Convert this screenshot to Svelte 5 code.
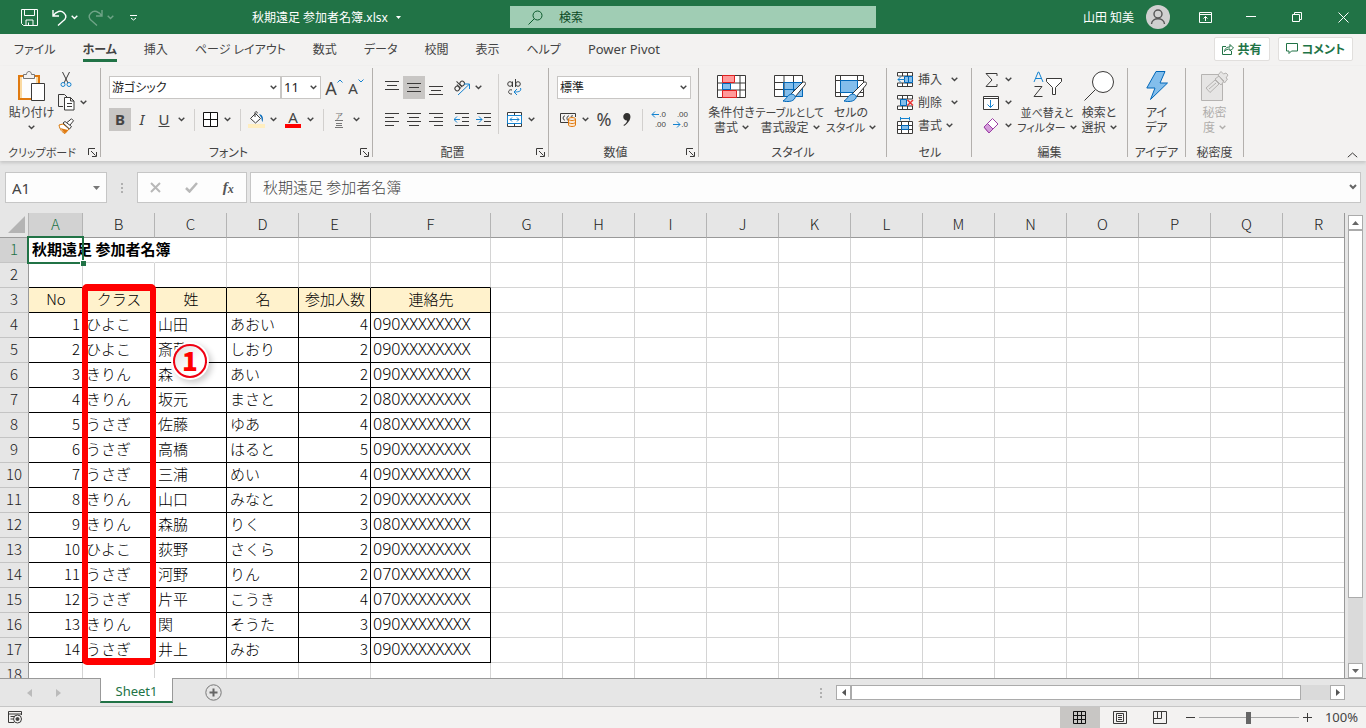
<script>
	const tabs = [
		'ファイル',
		'ホーム',
		'挿入',
		'ページ レイアウト',
		'数式',
		'データ',
		'校閲',
		'表示',
		'ヘルプ',
		'Power Pivot'
	];
	let activeTab = $state('ホーム');
	let formula = $state('秋期遠足 参加者名簿');
	let zoom = $state(100);

	const columns = 'ABCDEFGHIJKLMNOPQR'.split('');
	const widths = { A: 54, F: 120 };
	const headings = ['No', 'クラス', '姓', '名', '参加人数', '連絡先'];
	const people = [
		['ひよこ', '山田', 'あおい', 4, '090XXXXXXXX'],
		['ひよこ', '斎藤', 'しおり', 2, '090XXXXXXXX'],
		['きりん', '森', 'あい', 2, '090XXXXXXXX'],
		['きりん', '坂元', 'まさと', 2, '080XXXXXXXX'],
		['うさぎ', '佐藤', 'ゆあ', 4, '080XXXXXXXX'],
		['うさぎ', '高橋', 'はると', 5, '090XXXXXXXX'],
		['うさぎ', '三浦', 'めい', 4, '090XXXXXXXX'],
		['きりん', '山口', 'みなと', 2, '090XXXXXXXX'],
		['きりん', '森脇', 'りく', 3, '080XXXXXXXX'],
		['ひよこ', '荻野', 'さくら', 2, '090XXXXXXXX'],
		['うさぎ', '河野', 'りん', 2, '070XXXXXXXX'],
		['うさぎ', '片平', 'こうき', 4, '070XXXXXXXX'],
		['きりん', '関', 'そうた', 3, '090XXXXXXXX'],
		['うさぎ', '井上', 'みお', 3, '090XXXXXXXX']
	];

	// sheet rows, first one is row 1
	const rows = [
		['秋期遠足 参加者名簿'],
		[],
		headings,
		...people.map((p, i) => [i + 1, ...p]),
		[]
	];
</script>

{#snippet chev()}
	<svg class="chev" width="7" height="5" viewBox="0 0 7 5"><path d="M.7.8 3.5 3.5 6.3.8" /></svg>
{/snippet}

{#snippet drop(label)}
	<button class="drop" aria-label={label}>{@render chev()}</button>
{/snippet}

{#snippet caption(text, launcher)}
	<div class="caption">
		<span>{text}</span>
		{#if launcher}
			<button class="launcher" aria-label={`${text}の設定`}>
				<svg class="line" width="9" height="9" viewBox="0 0 9 9"><path d="M.5 7V.5H7M3 3l4.5 4.5M8.5 4v4.5H4" /></svg>
			</button>
		{/if}
	</div>
{/snippet}

{#snippet lines(kind)}
	<svg class="line" width="15" height="15" viewBox="0 0 15 15">
		{#if kind === 'top'}<path d="M0 1.5h14M2 5.5h10M0 9.5h14" />
		{:else if kind === 'middle'}<path d="M0 3.5h14M2 7.5h10M0 11.5h14" />
		{:else if kind === 'bottom'}<path d="M0 6.5h14M2 10.5h10M0 14.5h14" />
		{:else if kind === 'left'}<path d="M0 1.5h14M0 5.5h9M0 9.5h14M0 13.5h9" />
		{:else if kind === 'center'}<path d="M0 1.5h14M2 5.5h10M0 9.5h14M2 13.5h10" />
		{:else if kind === 'right'}<path d="M0 1.5h14M5 5.5h9M0 9.5h14M5 13.5h9" />
		{:else}
			<path d="M1 1.5h14M8 5.5h7M8 9.5h7M1 13.5h14" />
			{#if kind === 'outdent'}<path class="blue" d="M6 7.5H0M3 4.5l-3 3 3 3" />
			{:else}<path class="blue" d="M0 7.5h6M3 4.5l3 3-3 3" />{/if}
		{/if}
	</svg>
{/snippet}

{#snippet brush()}
	<path fill="#fff" stroke="#333" d="M29 7c3 0 3 1 2 3L21 22l-4-3z" />
	<path fill="#83beec" stroke="#0067b8" d="M17 19c3 0 5 2 4 4-2 4-8 4-12 3 3-1 4-6 8-7z" />
{/snippet}

<div class="app">
	<header class="titlebar">
		<div class="quick">
			<button aria-label="上書き保存">
				<svg width="17" height="17" viewBox="0 0 17 17"><path d="M.5.5h16v16h-14l-2-2zM3.5.5v6h10v-6M5 16.5V11h7v5.5M7.5 16v-2.5" /></svg>
			</button>
			<button class="wide" aria-label="元に戻す">
				<svg width="15" height="17" viewBox="0 0 15 17"><path stroke-width="1.4" d="M1 1v6h6M1 7C4 2 9 1 12 4s2 6-1 8l-5 4.5" /></svg>
				{@render chev()}
			</button>
			<button class="wide faded" aria-label="やり直し">
				<svg width="15" height="17" viewBox="0 0 15 17"><path stroke-width="1.4" d="M14 1v6H8M14 7C11 2 6 1 3 4s-2 6 1 8l5 4.5" /></svg>
				{@render chev()}
			</button>
			<button class="customize" aria-label="クイック アクセスのカスタマイズ">
				<svg width="9" height="7" viewBox="0 0 9 7"><path d="M1 1.5h7M2 4l2.5 2L7 4" /></svg>
			</button>
		</div>
		<button class="docname">秋期遠足 参加者名簿.xlsx <svg width="5" height="3" viewBox="0 0 5 3"><path class="solid" d="M0 0h5L2.5 3z" /></svg></button>
		<label class="search">
			<svg width="15" height="15" viewBox="0 0 15 15"><circle cx="9.5" cy="5.5" r="4.5" /><path d="M6.3 8.7.5 14.5" /></svg>
			<input type="text" placeholder="検索" aria-label="検索" />
		</label>
		<button class="user">
			山田 知美
			<svg width="24" height="24" viewBox="0 0 24 24"><circle class="disc" cx="12" cy="12" r="12" /><circle cx="12" cy="9" r="4" /><path d="M5.5 19c.5-7 12.500-7 13 0" /></svg>
		</button>
		<div class="window">
			<button aria-label="リボンの表示オプション"><svg width="13" height="11" viewBox="0 0 13 11"><path d="M.5.5h12v10H.5zM.5 2.5h12M6.5 9V4.5M4.5 6.5l2-2 2 2" /></svg></button>
			<button aria-label="最小化"><svg width="10" height="2" viewBox="0 0 10 2"><path d="M0 .5h10" /></svg></button>
			<button aria-label="元に戻す (縮小)"><svg width="10" height="10" viewBox="0 0 10 10"><path d="M.5 2.5h7v7h-7zM2.5 2V.5h7v7H8" /></svg></button>
			<button aria-label="閉じる"><svg width="11" height="11" viewBox="0 0 11 11"><path d="m.5.5 10 10m0-10-10 10" /></svg></button>
		</div>
	</header>

	<nav class="tabs">
		{#each tabs as tab}
			<button class="tab" class:active={activeTab === tab} onclick={() => (activeTab = tab)}>{tab}</button>
		{/each}
		<div class="actions">
			<button><svg width="12" height="12" viewBox="0 0 12 12"><path d="M4 3.5H.5v8h9V8M2.5 8.5C3 5 5 4 8 4V1.5L11.5 5 8 8V6C5.5 6 4 6.5 2.5 8.5z" /></svg>共有</button>
			<button><svg width="12" height="12" viewBox="0 0 12 12"><path d="M.5.5h11V8h-6L3 10.5V8H.5z" /></svg>コメント</button>
		</div>
	</nav>

	<section class="ribbon">
		<div class="group clip">
			<div class="tools">
				<button class="big paste">
					<svg width="28" height="31" viewBox="0 0 28 31">
						<path d="M1 5h20v23H1z" fill="#fdfdfd" stroke="#e07a10" stroke-width="2" />
						<path d="M3 6v21M19 6v7" stroke="#fad9a0" stroke-width="2" />
						<path d="M5.5 7.5v-4h3c0-4 5-4 5 0h3v4z" fill="#f3f2f1" stroke="#777" />
						<path d="M13.5 12.5h13v17h-13z" fill="#fff" stroke="#3b3a39" />
					</svg>
					<span>貼り付け</span>
					{@render chev()}
				</button>
				<div class="stack">
					<button class="tool" aria-label="切り取り">
						<svg class="line" width="12" height="17" viewBox="0 0 12 17"><path d="m2.500 1 5.500 11M9.500 1 4 12" /><circle class="blue" cx="3" cy="13.5" r="2" /><circle class="blue" cx="9" cy="13.5" r="2" /></svg>
					</button>
					<div class="row">
						<button class="tool" aria-label="コピー">
							<svg class="line" width="17" height="17" viewBox="0 0 17 17"><path d="M5 12.5H.5V.5h6L9 3" /><path fill="#fff" d="M6.5 3.5h6L16 7v9H6.5zM12.5 3.5V7H16M9 9.5h5M9 12.5h5" /></svg>
						</button>
						{@render drop('コピーのオプション')}
					</div>
					<button class="tool" aria-label="書式のコピー">
						<svg class="line" width="17" height="16" viewBox="0 0 17 16"><path stroke="#d97706" fill="#fff" d="m1 7 4-1 6 5-4 4.5C4 14 2 12 1 7z" /><path fill="#e07a10" stroke="none" d="m2 10 8 2-3 3.5z" /><path fill="#fff" d="m5 5 2-1.5 6.500 5L11.500 11zM9 4.500 13.500.8l2 2L12 7" /></svg>
					</button>
				</div>
			</div>
			{@render caption('クリップボード', true)}
		</div>

		<div class="group font">
			<div class="tools rows">
				<div class="row">
					<select class="font-name" aria-label="フォント"><option>游ゴシック</option></select>
					<select class="font-size" aria-label="フォント サイズ"><option>11</option></select>
					<button class="tool" aria-label="フォント サイズの拡大"><span class="glyph">A</span><svg class="sup" width="6" height="4" viewBox="0 0 6 4"><path class="blue" d="m.5 3.500 2.500-2.500 2.500 2.500" /></svg></button>
					<button class="tool" aria-label="フォント サイズの縮小"><span class="glyph small">A</span><svg class="sup" width="6" height="4" viewBox="0 0 6 4"><path class="blue" d="m.5.5 2.500 2.500L5.500.5" /></svg></button>
				</div>
				<div class="row">
					<button class="tool on"><b>B</b></button>
					<button class="tool"><i>I</i></button>
					<button class="tool"><u>U</u></button>
					{@render drop('下線')}
					<span class="sep"></span>
					<button class="tool" aria-label="罫線"><svg width="15" height="15" viewBox="0 0 15 15"><path fill="#fff" stroke="#111" d="M.5.5h14v14H.5zM7.5 0v15M0 7.5h15" /></svg></button>
					{@render drop('罫線の種類')}
					<span class="sep"></span>
					<button class="tool" aria-label="塗りつぶしの色">
						<svg class="line" width="17" height="17" viewBox="0 0 17 17"><path fill="#fff" d="m2.500 7.500 5-5 5 5-5 4.500zM7 6V1.500c1-2 3 0 2 1" /><path fill="#0067b8" stroke="none" d="M11 3c4 1 4.500 4 3.500 8-1-1.500-1-3-1-4z" /><path fill="#ffeec0" stroke="none" d="M0 13h17v4H0z" /></svg>
					</button>
					{@render drop('塗りつぶしの色の選択')}
					<button class="tool color" aria-label="フォントの色"><span class="glyph small">A</span><span class="bar"></span></button>
					{@render drop('フォントの色の選択')}
					<span class="sep"></span>
					<button class="tool ruby" aria-label="ふりがなの表示">
						<span>ア</span>
						<svg class="line" width="8" height="8" viewBox="0 0 8 8"><path stroke="#777" d="M0 .5h8M1 3.5h6M1 5.5h6M0 7.5h8" /></svg>
					</button>
					{@render drop('ふりがな')}
				</div>
			</div>
			{@render caption('フォント', true)}
		</div>

		<div class="group align">
			<div class="tools">
				<div class="rows">
					<div class="row">
						<button class="tool" aria-label="上揃え">{@render lines('top')}</button>
						<button class="tool on" aria-label="上下中央揃え">{@render lines('middle')}</button>
						<button class="tool" aria-label="下揃え">{@render lines('bottom')}</button>
						<button class="tool apart" aria-label="方向">
							<svg class="line" width="17" height="17" viewBox="0 0 17 17"><g transform="rotate(-45 6 7)"><circle cx="3" cy="7.5" r="2.3" /><path d="M5.5 4.5V10M7.5 2v8" /><circle cx="10" cy="7.5" r="2.3" /></g><path class="blue" d="m5 16 11-10.500M11 5h5.500v5" /></svg>
						</button>
						{@render drop('方向')}
					</div>
					<div class="row">
						<button class="tool" aria-label="左揃え">{@render lines('left')}</button>
						<button class="tool" aria-label="中央揃え">{@render lines('center')}</button>
						<button class="tool" aria-label="右揃え">{@render lines('right')}</button>
						<button class="tool apart" aria-label="インデントを減らす">{@render lines('outdent')}</button>
						<button class="tool" aria-label="インデントを増やす">{@render lines('indent')}</button>
					</div>
				</div>
				<span class="sep tall"></span>
				<div class="rows">
					<div class="row">
						<button class="tool" aria-label="折り返して全体を表示する">
							<svg class="line" width="15" height="17" viewBox="0 0 15 17"><circle cx="3" cy="5" r="2.3" /><path d="M5.5 2.5V8M8.5 0v8" /><circle cx="11" cy="5" r="2.3" /><path d="M5 11c-4-1.500-5 4.500 0 4" /><path class="blue" d="M13.500 9c1 3-1 4-6 4M10 10l-3 3 3 3" /></svg>
						</button>
					</div>
					<div class="row">
						<button class="tool" aria-label="セルを結合して中央揃え">
							<svg class="line" width="15" height="15" viewBox="0 0 15 15"><path fill="#fff" d="M.5.5h14v14H.5zM7.5.5V3M7.5 12v2.500" /><path class="blue" d="M.5 3.5h14v8H.5zM3 7.5h9M5 5.500l-2 2 2 2M10 5.500l2 2-2 2" /></svg>
						</button>
						{@render drop('セルの結合')}
					</div>
				</div>
			</div>
			{@render caption('配置', true)}
		</div>

		<div class="group number">
			<div class="tools rows">
				<div class="row">
					<select class="format" aria-label="数値の書式"><option>標準</option></select>
				</div>
				<div class="row">
					<button class="tool" aria-label="通貨表示形式">
						<svg class="line" width="17" height="15" viewBox="0 0 17 15"><path d="M9 10.5H.5v-9h15V5M5 4C2.500 3.500 2.500 8.500 5 8M9 4C6.500 3.500 6.500 8.500 8 8M13 4c-1-.5-2 0-2 1" /><path fill="#fde7cf" stroke="#e07a10" d="M8.5 7c0-2 7-2 7 0v6c0 2-7 2-7 0zM8.500 7c0 2 7 2 7 0M8.500 10c0 2 7 2 7 0" /></svg>
					</button>
					{@render drop('通貨')}
					<button class="tool percent">%</button>
					<button class="tool" aria-label="桁区切りスタイル">
						<svg width="8" height="13" viewBox="0 0 8 13"><path fill="#323130" d="M4 0c5 0 5 8-3 13L.5 12C3 10.500 4 9 4 7.500-1 7.500-1 0 4 0z" /></svg>
					</button>
					<span class="sep"></span>
					<button class="tool dec" aria-label="小数点以下の表示桁数を増やす"><span><svg width="8" height="7" viewBox="0 0 8 7"><path class="blue" d="M8 3.5H1M4 .5l-3 3 3 3" /></svg>.0</span><span>.00</span></button>
					<button class="tool dec" aria-label="小数点以下の表示桁数を減らす"><span>.00</span><span><svg width="8" height="7" viewBox="0 0 8 7"><path class="blue" d="M0 3.5h7M4 .5l3 3-3 3" /></svg>.0</span></button>
				</div>
			</div>
			{@render caption('数値', true)}
		</div>

		<div class="group styles">
			<div class="tools">
				<button class="big">
					<svg class="line" width="29" height="23" viewBox="0 0 29 23"><path fill="#fff" d="M.5.5h28v22H.5zM.5 8h28M.5 15h28M23 .5v22M6 .5v22" /><path fill="#ff9a9a" stroke="#e02020" d="M5.500 .5h12v7h-12zM5.500 15.500h14v7h-14z" /><path fill="#83beec" stroke="#0067b8" d="M5.500 8.500h8v6h-8z" /></svg>
					<span>条件付き</span>
					<span>書式 {@render chev()}</span>
				</button>
				<button class="big table">
					<svg class="line" width="32" height="27" viewBox="0 0 32 27"><path fill="#fff" d="M.5.5h28v21H.5zM.5 7.500h28" /><path fill="#83beec" stroke="none" d="M10 8h18v14H10z" /><path d="M.5 14.500h28M10 .5v21M19.500 .5v21" /><path d="M9.500 7.500h19v14h-19zM19.500 8v13.500M10 14.500h18" stroke="#0067b8" />{@render brush()}</svg>
					<span class="tight">テーブルとして</span>
					<span>書式設定 {@render chev()}</span>
				</button>
				<button class="big cell">
					<svg class="line" width="32" height="27" viewBox="0 0 32 27"><path fill="#fff" d="M.5.5h28v21H.5zM.5 5.500h28M5.500 .5v21M22.500 .5v21M.5 17.500h28" /><path fill="#83beec" stroke="#0067b8" d="M5.500 5.500h17v12h-17z" />{@render brush()}</svg>
					<span>セルの</span>
					<span class="tight">スタイル {@render chev()}</span>
				</button>
			</div>
			{@render caption('スタイル', false)}
		</div>

		<div class="group cells">
			<div class="tools stack">
				<button class="wide-tool">
					<svg class="line" width="17" height="15" viewBox="0 0 17 15"><path fill="#fff" d="M.5.5h15V4H.5zM.5 11h15v3.500H.5zM5.500.5V4M10.500.5V4M5.500 11v3.500M10.500 11v3.500" /><path fill="#83beec" stroke="#0067b8" d="M7.500 4.500h8v6h-8zM11.500 4.500v6" /><path class="blue" d="M8 7.500H1M4 4.500l-3 3 3 3" /></svg>
					<span>挿入</span>{@render chev()}
				</button>
				<button class="wide-tool">
					<svg class="line" width="17" height="15" viewBox="0 0 17 15"><path fill="#fff" d="M.5.5h15V4H.5zM.5 11h15v3.500H.5zM5.500.5V4M10.500.5V4M5.500 11v3.500M10.500 11v3.500" /><path fill="#83beec" stroke="#0067b8" d="M3.500 4.500h6v6h-6z" /><path stroke="#e83030" stroke-width="1.5" d="m10.500 5 5.500 5.500M16 5l-5.500 5.500" /></svg>
					<span>削除</span>{@render chev()}
				</button>
				<button class="wide-tool near">
					<svg class="line" width="17" height="17" viewBox="0 0 17 17"><path fill="#fff" d="M.5 4.500h15v12H.5zM.5 8.500h15M.5 12.500h15M4.500 4.500v12M11.500 4.500v12" /><path fill="#83beec" stroke="#0067b8" d="M4.500 8.500h7v4h-7z" /><path class="blue" d="M3.500 0v3.500M12.500 0v3.500M3.500 1.500h9" /></svg>
					<span>書式</span>{@render chev()}
				</button>
			</div>
			{@render caption('セル', false)}
		</div>

		<div class="group edit">
			<div class="tools">
				<div class="stack">
					<div class="row">
						<button class="tool" aria-label="合計"><svg class="line" width="13" height="14" viewBox="0 0 13 14"><path d="M12 3V.5H1L7 7l-6 6.500h11V11" /></svg></button>
						{@render drop('合計の種類')}
					</div>
					<div class="row">
						<button class="tool" aria-label="フィル"><svg class="line" width="16" height="14" viewBox="0 0 16 14"><path fill="#fff" d="M.5.5h15v13H.5zM.5 2.500h15" /><path class="blue" d="M7.500 4v7.500M4.500 8.500l3 3 3-3" /></svg></button>
						{@render drop('フィルの種類')}
					</div>
					<div class="row">
						<button class="tool" aria-label="クリア"><svg width="16" height="16" viewBox="0 0 16 16"><path fill="#fff" stroke="#9b3fa5" d="m1 9 8.500-8.500L15 6l-9 9z" /><path fill="#d59ddb" stroke="#9b3fa5" d="m1 9 3.500-3.500 5.500 5.500-4 4z" /></svg></button>
						{@render drop('クリアの種類')}
					</div>
				</div>
				<button class="big sort">
					<svg class="line" width="29" height="27" viewBox="0 0 29 27"><path class="blue" d="M1 11 5.200 1h.6L10 11M2.500 7.500h6.500" /><path d="M1.500 15.500h7.500l-8 10h8.500" /><path fill="#fff" d="M13.500 7.500h15v3l-6 6v7h-3v-7l-6-6z" /></svg>
					<span class="tight">並べ替えと</span>
					<span class="tight">フィルター {@render chev()}</span>
				</button>
				<button class="big find">
					<svg class="line" width="30" height="30" viewBox="0 0 30 30"><circle fill="#fff" cx="19" cy="11" r="10.5" /><path d="M11.500 18.500.5 29.500" /></svg>
					<span>検索と</span>
					<span>選択 {@render chev()}</span>
				</button>
			</div>
			{@render caption('編集', false)}
		</div>

		<div class="group narrow">
			<div class="tools">
				<button class="big">
					<svg width="22" height="29" viewBox="0 0 22 29"><path fill="#83beec" stroke="#0067b8" d="M10 .5h9L14 12h7.500L4.500 28.500 9 17H.8z" /></svg>
					<span>アイ</span>
					<span>デア</span>
				</button>
			</div>
			{@render caption('アイデア', false)}
		</div>

		<div class="group narrow">
			<div class="tools">
				<button class="big" disabled>
					<svg width="28" height="30" viewBox="0 0 28 30"><g fill="#e6e5e4" stroke="#b5b3b1"><path d="M.5 3.500h21v26H.5z" /><path d="m5 17 9-8 4 4-9 8.500zM14 8l4-3 5 5-3 4zM17 4l3-3.500 2.500 2.500 2.500-1 2 2-2 3 1.500 1-3 4z" /><path d="m8 18 7-6" /></g></svg>
					<span>秘密</span>
					<span>度 {@render chev()}</span>
				</button>
			</div>
			{@render caption('秘密度', false)}
		</div>
		<button class="collapse" aria-label="リボンを折りたたむ"><svg class="line" width="11" height="6" viewBox="0 0 11 6"><path d="M.8 5.200 5.500 1l4.700 4.200" /></svg></button>
	</section>

	<div class="formula-bar">
		<div class="name-box">
			<input type="text" value="A1" aria-label="名前ボックス" />
			<button aria-label="名前の一覧"><svg width="7" height="4" viewBox="0 0 7 4"><path fill="#777" d="M0 0h7L3.500 4z" /></svg></button>
		</div>
		<span class="dots"></span>
		<div class="fx">
			<button aria-label="キャンセル"><svg width="11" height="11" viewBox="0 0 11 11"><path stroke="#b8b8b8" stroke-width="2" d="m1 1 9 9m0-9-9 9" /></svg></button>
			<button aria-label="入力"><svg width="13" height="11" viewBox="0 0 13 11"><path fill="none" stroke="#b8b8b8" stroke-width="2.5" d="m1 6 3.500 3.500L12 1" /></svg></button>
			<button class="fn"><em>f</em><em class="x">x</em></button>
		</div>
		<div class="formula">
			<input type="text" bind:value={formula} aria-label="数式バー" />
			<button aria-label="数式バーの展開"><svg width="8" height="6" viewBox="0 0 8 6"><path fill="none" stroke="#666" stroke-width="2" d="m1 1 3 3 3-3" /></svg></button>
		</div>
	</div>

	<main class="sheet">
		<div class="grid">
			<table>
				<colgroup>
					<col style:width="29px" />
					{#each columns as c}<col style:width={`${widths[c] ?? 72}px`} />{/each}
				</colgroup>
				<thead>
					<tr>
						<th class="corner" aria-label="すべて選択"><svg width="17" height="17" viewBox="0 0 17 17"><path fill="#b4b4b4" d="M17 0v17H0z" /></svg></th>
						{#each columns as c}<th scope="col" class:selected={c === 'A'}>{c}</th>{/each}
					</tr>
				</thead>
				<tbody>
					{#each rows as row, r}
						<tr class:above={r === 1} class:heading={r === 2} class:data={r > 2 && r < 17} class:title={r === 0}>
							<th scope="row" class:selected={r === 0}>{r + 1}</th>
							{#each columns as c, i}
								<td class:listed={r > 1 && r < 17 && i < 6} class:num={i === 0 || i === 4} class:tel={i === 5}>{row[i] ?? ''}</td>
							{/each}
						</tr>
					{/each}
				</tbody>
			</table>
			<div class="selection"><span class="handle"></span></div>
			<div class="frame"></div>
			<div class="marker">1</div>
		</div>
		<div class="vscroll">
			<button aria-label="上へ"><svg width="7" height="4" viewBox="0 0 7 4"><path fill="#666" d="M0 4h7L3.500 0z" /></svg></button>
			<div class="track"><div class="thumb"></div></div>
			<button aria-label="下へ"><svg width="7" height="4" viewBox="0 0 7 4"><path fill="#666" d="M0 0h7L3.500 4z" /></svg></button>
		</div>
	</main>

	<div class="sheetbar">
		<div class="arrows">
			<button aria-label="前のシート"><svg width="5" height="8" viewBox="0 0 5 8"><path fill="#bbb" d="M5 0v8L0 4z" /></svg></button>
			<button aria-label="次のシート"><svg width="5" height="8" viewBox="0 0 5 8"><path fill="#bbb" d="M0 0v8l5-4z" /></svg></button>
		</div>
		<button class="sheet-tab">Sheet1</button>
		<button class="add" aria-label="新しいシート"><svg width="17" height="17" viewBox="0 0 17 17"><circle cx="8.5" cy="8.5" r="7.7" fill="none" stroke="#777" /><path stroke="#666" stroke-width="2" d="M8.500 4.500v8M4.500 8.500h8" /></svg></button>
		<span class="dots"></span>
		<div class="hscroll">
			<button aria-label="左へ"><svg width="4" height="7" viewBox="0 0 4 7"><path fill="#555" d="M4 0v7L0 3.500z" /></svg></button>
			<div class="track"><div class="thumb"></div></div>
			<button aria-label="右へ"><svg width="4" height="7" viewBox="0 0 4 7"><path fill="#555" d="M0 0v7l4-3.500z" /></svg></button>
		</div>
	</div>

	<footer class="status">
		<button class="macro" aria-label="マクロの記録"><svg class="line" width="15" height="13" viewBox="0 0 15 13"><path d="M6 11.500H.5V.5h13V4M.5 3h13M2.500 5.500h4M2.500 8H5" /><circle cx="9.5" cy="8" r="4" /><circle cx="9.5" cy="8" r="1.5" fill="#444" /></svg></button>
		<div class="views">
			<button class="on" aria-label="標準"><svg class="line" width="13" height="13" viewBox="0 0 13 13"><path stroke="#111" d="M.5.5h12v12H.5zM4.500.5v12M8.500.5v12M.5 4.500h12M.5 8.500h12" /></svg></button>
			<button aria-label="ページ レイアウト"><svg class="line" width="14" height="13" viewBox="0 0 14 13"><path d="M.5.5h13v12H.5zM3.500 2.500h7v8h-7zM5 4.500h4M5 6.500h4M5 8.500h4" /></svg></button>
			<button aria-label="改ページ プレビュー"><svg class="line" width="14" height="13" viewBox="0 0 14 13"><path d="M.5.5h13v12H.5zM4.500.5v7M8.500.5v7M.5 7.500h8" /></svg></button>
		</div>
		<button class="step" aria-label="縮小"><svg class="line" width="9" height="9" viewBox="0 0 9 9"><path d="M0 4.500h9" /></svg></button>
		<input type="range" min="0" max="200" bind:value={zoom} aria-label="ズーム" />
		<button class="step" aria-label="拡大"><svg class="line" width="9" height="9" viewBox="0 0 9 9"><path d="M0 4.500h9M4.500 0v9" /></svg></button>
		<button class="percentage">{zoom}%</button>
	</footer>
</div>

<style>
	:global(body) {
		margin: 0;
	}

	.app {
		display: flex;
		flex-direction: column;
		height: 100vh;
		overflow: hidden;
		background: #e6e6e6;
		color: #444;
		font-family: 'Noto Sans', 'Noto Sans CJK JP', sans-serif;
		font-size: 12px;
		line-height: 15px;
		font-feature-settings: 'palt';
	}

	button,
	input,
	select {
		font: inherit;
		font-feature-settings: inherit;
		color: inherit;
		margin: 0;
		padding: 0;
		border: 0;
		border-radius: 0;
		background: none;
	}

	input {
		min-width: 0;
		outline: none;
	}

	button {
		display: flex;
		align-items: center;
		justify-content: center;
		flex: none;
		white-space: nowrap;
	}

	svg {
		flex: none;
		display: block;
	}

	.line {
		fill: none;
		stroke: #3b3a39;
	}

	.blue {
		fill: none;
		stroke: #1583d0;
	}

	.chev {
		fill: none;
		stroke: currentColor;
		stroke-width: 1.4;
	}

	/* title bar */
	.titlebar {
		display: flex;
		align-items: center;
		flex: none;
		height: 34px;
		background: #217346;
		color: #fff;
	}

	.titlebar svg {
		fill: none;
		stroke: currentColor;
	}

	.titlebar .solid {
		fill: currentColor;
		stroke: none;
	}

	.quick {
		display: flex;
		gap: 10px;
		padding-left: 16px;
		width: 234px;
		box-sizing: border-box;
	}

	.quick button {
		min-width: 26px;
		height: 26px;
	}

	.quick .wide {
		gap: 4px;
	}

	.quick .customize {
		min-width: 18px;
	}

	.quick .faded {
		opacity: 0.35;
	}

	.docname {
		gap: 8px;
		margin-left: 18px;
	}

	.search {
		display: flex;
		align-items: center;
		gap: 16px;
		flex: 0 1 366px;
		height: 22px;
		box-sizing: border-box;
		margin-left: 109px;
		padding-left: 18px;
		background: #a0cdb4;
		color: #0b5a2c;
	}

	.search input {
		flex: 1;
	}

	.search input::placeholder {
		color: #0b4a24;
		opacity: 1;
	}

	.user {
		gap: 12px;
		margin-left: auto;
	}

	.titlebar .user svg {
		stroke: #555;
		stroke-width: 1.4;
	}

	.titlebar .disc {
		fill: #d0d0d0;
		stroke: none;
	}

	.window {
		display: flex;
		margin-left: 12px;
	}

	.window button {
		width: 46px;
		height: 34px;
	}

	/* ribbon tabs */
	.tabs {
		display: flex;
		align-items: center;
		flex: none;
		gap: 27px;
		height: 32px;
		box-sizing: border-box;
		padding: 0 13px 2px 14px;
		background: #f3f2f1;
	}

	.tab {
		height: 26px;
		border-bottom: 3px solid transparent;
		border-top: 3px solid transparent;
		box-sizing: border-box;
	}

	.tab.active {
		border-bottom-color: #217346;
		font-weight: bold;
	}

	.tab:last-of-type {
		font-size: 13px;
	}

	.actions {
		display: flex;
		gap: 8px;
		margin-left: auto;
	}

	.actions button {
		gap: 4px;
		height: 24px;
		padding: 0 7px;
		border: 1px solid #e1dfdd;
		border-radius: 2px;
		background: #fff;
		color: #217346;
		font-weight: bold;
	}

	.actions svg {
		fill: none;
		stroke: #217346;
	}

	/* ribbon */
	.ribbon {
		display: flex;
		flex: none;
		height: 95px;
		background: #f3f2f1;
		box-shadow: 0 2px 3px #c6c6c6;
		position: relative;
	}

	.group {
		display: flex;
		flex-direction: column;
		flex: none;
		height: 89px;
		margin-top: 2px;
		box-sizing: border-box;
		border-right: 1px solid #b3b0ad;
		padding-left: 8px;
	}

	.clip {
		width: 101px;
	}

	.font {
		width: 272px;
	}

	.align {
		width: 176px;
	}

	.number {
		width: 150px;
	}

	.styles {
		width: 188px;
	}

	.cells {
		width: 85px;
	}

	.edit {
		width: 156px;
	}

	.narrow {
		width: 58px;
		padding-left: 0;
	}

	.tools {
		display: flex;
		flex: 1;
	}

	.rows {
		display: flex;
		flex-direction: column;
		gap: 9px;
		padding-top: 8px;
	}

	.row {
		display: flex;
		align-items: center;
		height: 23px;
	}

	.stack {
		display: flex;
		flex-direction: column;
	}

	.caption {
		display: flex;
		align-items: center;
		justify-content: center;
		position: relative;
		height: 9px;
		margin-left: -8px;
	}

	.clip .caption,
	.font .caption,
	.align .caption,
	.number .caption {
		padding-right: 16px;
	}

	.clip .caption,
	.tight {
		font-size: 11px;
	}

	.narrow .caption {
		margin-left: 0;
	}

	.launcher {
		position: absolute;
		right: 3px;
		bottom: 0;
		width: 9px;
		height: 9px;
	}

	.tool {
		width: 22px;
		height: 23px;
		font-size: 15px;
	}

	.on {
		background: #c8c6c4;
	}

	.drop {
		width: 13px;
		height: 23px;
	}

	.sep {
		width: 1px;
		height: 22px;
		margin: 0 4px 0 6px;
		background: #d2d0ce;
	}

	.number .sep {
		margin: 0 4px;
	}

	.sep.tall {
		height: 60px;
		margin: 6px 4px 0;
	}

	.apart {
		margin-left: 3px;
	}

	.big {
		flex-direction: column;
		justify-content: flex-start;
		width: 47px;
		height: 76px;
		line-height: 15px;
	}

	.big > svg:first-child {
		margin: 3px 0 auto;
	}

	.big > span {
		display: flex;
		align-items: center;
		gap: 4px;
	}

	.big > span:last-child {
		margin-bottom: 9px;
	}

	.paste > .chev {
		margin: 5px 0 14px;
	}

	.styles .big > svg:first-child {
		margin-top: 7px;
	}

	.styles {
		padding-left: 9px;
	}

	.table {
		width: 70px;
	}

	.cell {
		width: 52px;
	}

	.narrow .big {
		width: 57px;
	}

	.big:disabled {
		color: #b0aeac;
	}

	.edit .stack {
		width: 40px;
	}

	.sort {
		width: 54px;
	}

	.find {
		width: 50px;
	}

	select {
		appearance: none;
		height: 23px;
		box-sizing: border-box;
		padding: 0 2px;
		border: 1px solid #c8c6c4;
		background: #fff
			url("data:image/svg+xml,%3Csvg xmlns='http://www.w3.org/2000/svg' width='7' height='5'%3E%3Cpath d='M.7.8 3.5 3.5 6.3.8' fill='none' stroke='%23444' stroke-width='1.4'/%3E%3C/svg%3E")
			no-repeat right 3px center;
		color: #222;
	}

	.font-name {
		width: 172px;
	}

	.font-size {
		width: 40px;
		margin-right: 2px;
		font-size: 13px;
	}

	.format {
		width: 134px;
	}

	.glyph {
		font-size: 18px;
		line-height: 18px;
	}

	.glyph.small {
		font-size: 15px;
	}

	.sup {
		align-self: flex-start;
		margin-top: 3px;
	}

	.color {
		flex-direction: column;
		margin-left: 2px;
	}

	.color .glyph {
		line-height: 13px;
	}

	.bar {
		width: 16px;
		height: 4px;
		background: #f00;
	}

	.ruby {
		flex-direction: column;
		font-size: 8px;
		line-height: 9px;
		color: #777;
	}

	.percent {
		width: 24px;
		font-size: 18px;
	}

	.dec {
		flex-direction: column;
		align-items: flex-end;
		font-family: 'Liberation Sans', sans-serif;
		font-size: 8px;
		line-height: 10px;
		padding-right: 3px;
		box-sizing: border-box;
	}

	.dec span {
		display: flex;
		align-items: center;
	}

	.cells {
		padding-left: 10px;
	}

	.wide-tool {
		justify-content: flex-start;
		gap: 4px;
		height: 23px;
	}

	.wide-tool .chev {
		margin-left: 5px;
	}

	.near .chev {
		margin-left: 0;
	}

	.collapse {
		align-self: flex-end;
		margin: 0 8px 3px auto;
	}

	/* formula bar */
	.formula-bar {
		display: flex;
		align-items: center;
		flex: none;
		height: 31px;
		padding: 11px 5px 10px;
		font-size: 15px;
	}

	.name-box,
	.fx,
	.formula {
		display: flex;
		align-items: center;
		height: 31px;
		box-sizing: border-box;
		border: 1px solid #c6c6c6;
		background: #fdfdfd;
	}

	.name-box {
		width: 102px;
		padding: 0 6px;
	}

	.name-box input {
		flex: 1;
	}

	.dots {
		width: 2px;
		height: 10px;
		margin: 0 14px;
		background: repeating-linear-gradient(#b0b0b0 0 2px, transparent 2px 4px);
	}

	.fx {
		width: 110px;
		justify-content: space-around;
	}

	.fn {
		font-family: 'Liberation Serif', serif;
		font-weight: bold;
		color: #555;
	}

	.fn .x {
		font-size: 12px;
		padding-top: 3px;
	}

	.formula {
		flex: 1;
		margin-left: 3px;
		padding: 0 3px 2px 12px;
	}

	.formula input {
		flex: 1;
		font-family: 'Noto Sans CJK JP', sans-serif;
		font-feature-settings: normal;
		font-weight: 300;
	}

	/* sheet */
	.sheet {
		display: flex;
		flex: 1;
		min-height: 0;
	}

	.grid {
		position: relative;
		flex: 1;
		min-width: 0;
		overflow: hidden;
		background: #fff;
		border-right: 1px solid #999;
	}

	table {
		table-layout: fixed;
		width: 0;
		border-collapse: separate;
		border-spacing: 0;
		font-family: 'Noto Sans CJK JP', sans-serif;
		font-size: 15px;
		font-weight: 300;
		font-feature-settings: normal;
		color: #000;
	}

	th,
	td {
		height: 25px;
		box-sizing: border-box;
		padding: 0 0 2px;
		line-height: 20px;
		white-space: nowrap;
		border-right: 1px solid #d4d4d4;
		border-bottom: 1px solid #d4d4d4;
	}

	th {
		font-weight: inherit;
		text-align: center;
		background: #e6e6e6;
		color: #222;
	}

	thead th {
		border-right-color: #b4b4b4;
		border-bottom-color: #999;
	}

	tbody th {
		border-right-color: #999;
		border-bottom-color: #c4c4c4;
	}

	.corner svg {
		margin-left: 8px;
	}

	th.selected {
		background: #d2d2d2;
		color: #217346;
	}

	td {
		padding: 0 2px 2px 3px;
	}

	.title td:nth-child(2),
	.title td:nth-child(3) {
		border-right-color: transparent;
		font-weight: bold;
	}

	.above td:nth-child(-n + 7) {
		border-bottom-color: #000;
	}

	.listed {
		border-color: #000;
	}

	.heading .listed {
		background: #fff2cc;
		text-align: center;
	}

	.data .num {
		text-align: right;
	}

	.data .tel {
		padding-left: 2px;
		font-family: 'Noto Sans', sans-serif;
		font-size: 16px;
	}

	.selection {
		position: absolute;
		top: 23px;
		left: 27px;
		width: 53px;
		height: 24px;
		border: 2px solid #217346;
	}

	.handle {
		position: absolute;
		right: -4px;
		bottom: -4px;
		width: 5px;
		height: 5px;
		background: #217346;
		border: 1px solid #fff;
		border-width: 1px 0 0 1px;
	}

	.frame {
		position: absolute;
		top: 71px;
		left: 82px;
		width: 74px;
		height: 381px;
		box-sizing: border-box;
		border: 7px solid #f00;
		border-width: 7px 6px;
		border-radius: 5px;
	}

	.marker {
		position: absolute;
		top: 131px;
		left: 173px;
		width: 34px;
		height: 34px;
		box-sizing: border-box;
		border: 2px solid #f00012;
		border-radius: 50%;
		background: linear-gradient(135deg, #ddd, #fff 60%);
		box-shadow:
			0 0 0 2px #fff,
			3px 3px 6px 2px #0003;
		color: #f00;
		font-family: 'Noto Sans CJK JP', sans-serif;
		font-size: 26px;
		font-weight: 900;
		line-height: 28px;
		text-align: center;
	}

	.vscroll {
		display: flex;
		flex-direction: column;
		width: 15px;
		margin: 2px 3px 0;
	}

	.vscroll button,
	.hscroll button {
		width: 15px;
		height: 15px;
		box-sizing: border-box;
		border: 1px solid #ababab;
		background: #fff;
	}

	.track {
		flex: 1;
		background: #dadada;
	}

	.thumb {
		box-sizing: border-box;
		border: 1px solid #ababab;
		background: #fff;
	}

	.vscroll .thumb {
		height: 85%;
	}

	/* sheet tabs */
	.sheetbar {
		display: flex;
		align-items: center;
		flex: none;
		height: 28px;
		box-sizing: border-box;
		padding-right: 21px;
		border-top: 1px solid #999;
		font-size: 13px;
	}

	.arrows {
		display: flex;
		justify-content: center;
		gap: 24px;
		width: 87px;
		margin-right: 13px;
	}

	.sheet-tab {
		align-self: flex-start;
		width: 73px;
		height: 25px;
		margin-top: -1px;
		padding-top: 3px;
		box-sizing: border-box;
		border: 1px solid #999;
		border-width: 0 1px 2px;
		border-bottom-color: #217346;
		background: #fff;
		color: #217346;
	}

	.add {
		margin: 0 auto 0 32px;
	}

	.hscroll {
		display: flex;
		flex: 0 1 509px;
	}

	.hscroll .thumb {
		width: 94%;
		height: 15px;
	}

	/* status bar */
	.status {
		display: flex;
		align-items: center;
		flex: none;
		height: 22px;
		box-sizing: border-box;
		padding: 0 8px;
		border-top: 1px solid #c6c6c6;
		background: #f3f2f1;
		font-size: 13px;
	}

	.views {
		display: flex;
		margin: 0 6px 0 auto;
	}

	.views button {
		width: 40px;
		height: 21px;
	}

	input[type='range'] {
		appearance: none;
		width: 100px;
		height: 12px;
		margin: 0 4px;
		background: linear-gradient(#a6a6a6, #a6a6a6) no-repeat center / 100% 1px;
	}

	input[type='range']::-webkit-slider-thumb {
		appearance: none;
		width: 5px;
		height: 12px;
		background: #666;
	}

	.percentage {
		margin-left: 13px;
	}
</style>
